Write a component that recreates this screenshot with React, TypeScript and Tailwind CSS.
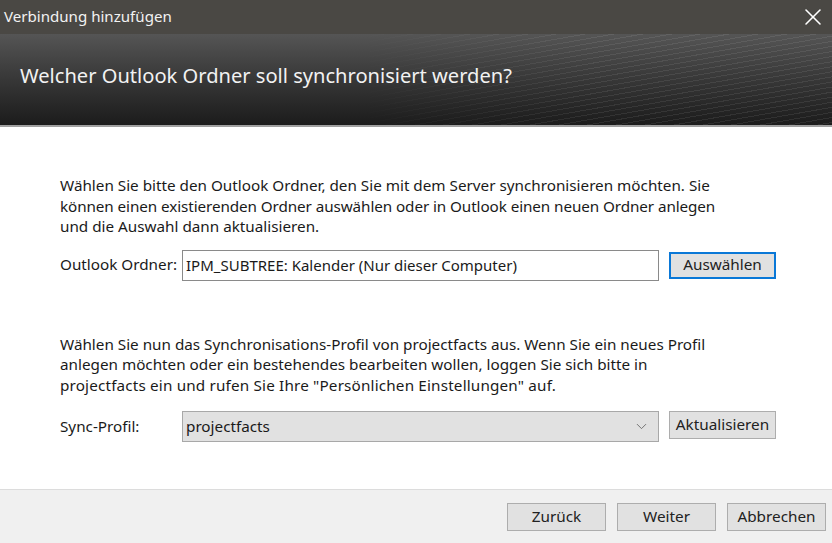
import { ChevronDown, X } from 'lucide-react';

const font = "font-['Noto_Sans','Open_Sans',sans-serif]";

function DialogButton({ label, focused, className }: { label: string; focused?: boolean; className: string }) {
	return (
		<button
			className={`flex items-center justify-center bg-[#e1e1e1] text-[15.3px] leading-none text-[#222] ${
				focused ? 'border-2 border-[#0a78d7]' : 'border border-[#adadad]'
			} ${className}`}
		>
			{label}
		</button>
	);
}

export default function App() {
	return (
		<div className={`flex h-[543px] w-[832px] flex-col overflow-hidden bg-white ${font}`}>
			{/* Title bar */}
			<div className="flex h-[34px] shrink-0 items-center justify-between bg-[#4a4844] pl-[4px] pr-[5px]">
				<span className="text-[15.1px] leading-none text-[#f2f2f2]">Verbindung hinzufügen</span>
				<X className="h-[28px] w-[28px] text-white" strokeWidth={1.3} />
			</div>

			{/* Header band */}
			<div className="relative flex h-[93px] shrink-0 items-center border-b-2 border-[#a0a0a0] bg-gradient-to-b from-[#555555] to-[#1c1c1c] pl-[20px]">
				<div className="absolute inset-y-0 right-0 w-[480px] bg-[repeating-linear-gradient(170deg,rgba(255,255,255,0.08)_0px,rgba(255,255,255,0.08)_1px,transparent_1px,transparent_5px)] [mask-image:linear-gradient(to_right,transparent,black_50%)]" />
				<h1 className="relative mb-[6px] text-[20.1px] font-normal leading-none text-[#f2f2f2]">
					Welcher Outlook Ordner soll synchronisiert werden?
				</h1>
			</div>

			{/* Content */}
			<div className="flex flex-1 flex-col pl-[60px] pr-[56px] pt-[48px] text-[15.25px] text-[#1a1a1a]">
				<p className="w-[700px] leading-[20.5px]">
					Wählen Sie bitte den Outlook Ordner, den Sie mit dem Server synchronisieren möchten. Sie
					<br />
					<span className="tracking-[-0.09px]">
						können einen existierenden Ordner auswählen oder in Outlook einen neuen Ordner anlegen
					</span>
					<br />
					und die Auswahl dann aktualisieren.
				</p>
				<div className="mt-[13px] flex items-center">
					<span className="w-[122px] shrink-0 leading-none">Outlook Ordner:</span>
					<div className="flex h-[31px] w-[477px] items-center border border-[#8a8a8a] pl-[3px] text-[15px] leading-none">
						IPM_SUBTREE: Kalender (Nur dieser Computer)
					</div>
					<DialogButton label="Auswählen" focused className="ml-[10px] h-[27px] w-[107px]" />
				</div>

				<p className="mt-[53px] w-[700px] leading-[20.5px]">
					Wählen Sie nun das Synchronisations-Profil von projectfacts aus. Wenn Sie ein neues Profil
					<br />
					anlegen möchten oder ein bestehendes bearbeiten wollen, loggen Sie sich bitte in
					<br />
					<span className="tracking-[0.17px]">
						projectfacts ein und rufen Sie Ihre "Persönlichen Einstellungen" auf.
					</span>
				</p>
				<div className="mt-[16px] flex items-start">
					<span className="mt-[8px] w-[122px] shrink-0 leading-none">Sync-Profil:</span>
					<div className="flex h-[31px] w-[477px] items-center justify-between border border-[#a8a8a8] bg-[#e1e1e1] pl-[3px] pr-[8px] leading-none">
						<span>projectfacts</span>
						<ChevronDown className="h-[17px] w-[17px] text-[#666]" strokeWidth={1.25} />
					</div>
					<DialogButton label="Aktualisieren" className="ml-[10px] h-[28px] w-[107px]" />
				</div>
			</div>

			{/* Footer */}
			<div className="flex h-[54px] shrink-0 items-center justify-end gap-[11px] border-t border-[#dcdcdc] bg-[#f0f0f0] pr-[6px]">
				<DialogButton label="Zurück" className="h-[28px] w-[99px]" />
				<DialogButton label="Weiter" className="h-[28px] w-[99px]" />
				<DialogButton label="Abbrechen" className="h-[28px] w-[99px]" />
			</div>
		</div>
	);
}
